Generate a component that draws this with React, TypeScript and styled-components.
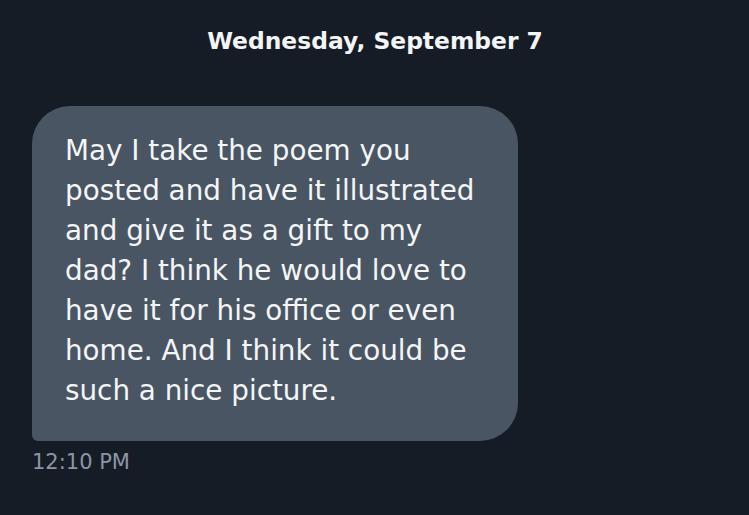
import React from 'react';
import styled, { createGlobalStyle } from 'styled-components';

const GlobalStyle = createGlobalStyle`
  html, body {
    margin: 0;
    padding: 0;
    background: #161c26;
  }
  body {
    font-family: "DejaVu Sans", "Noto Sans", "Liberation Sans", sans-serif;
    -webkit-font-smoothing: antialiased;
  }
`;

const Page = styled.div`
  width: 749px;
  height: 515px;
  background: #161c26;
  box-sizing: border-box;
  padding: 26px 32px 0 32px;
  display: flex;
  flex-direction: column;
`;

const DateHeader = styled.div`
  color: #f2f4f5;
  font-size: 23.4px;
  font-weight: 700;
  text-align: center;
  line-height: 30px;
  padding-left: 1px;
`;

const Bubble = styled.div`
  margin-top: 50px;
  width: 486px;
  box-sizing: border-box;
  background: #4a5563;
  border-radius: 38px 38px 38px 6px;
  padding: 25px 24px 30px 33px;
  color: #f3f5f7;
  font-size: 27.8px;
  line-height: 40px;
`;

const Time = styled.div`
  margin-top: 8px;
  color: #8c96a3;
  font-size: 21px;
  line-height: 26px;
`;

const App: React.FC = () => {
  return (
    <>
      <GlobalStyle />
      <Page>
        <DateHeader>Wednesday, September 7</DateHeader>
        <Bubble>
          May I take the poem you posted and have it illustrated and give it as a gift to my
          dad? I think he would love to have it for his office or even home. And I think it
          could be such a nice picture.
        </Bubble>
        <Time>12:10 PM</Time>
      </Page>
    </>
  );
};

export default App;
